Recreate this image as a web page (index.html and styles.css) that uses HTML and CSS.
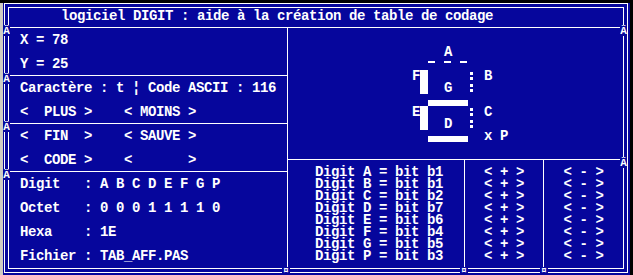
FILE: index.html
```html
<!DOCTYPE html>
<html lang="fr">
<head>
    <meta charset="UTF-8">
    <title>logiciel DIGIT</title>
    <link rel="stylesheet" href="styles.css">
</head>
<body>
    <div class="desk">
        <div class="frame">
            <div class="inner">
                <div class="title">logiciel DIGIT : aide à la création de table de codage</div>
                <div class="main">
                    <div class="left">
                        <div class="sec">
                            <div class="ln">X = 78</div>
                            <div class="ln">Y = 25</div>
                        </div>
                        <div class="sec">
                            <div class="ln">Caractère : t ¦ Code ASCII : 116</div>
                            <div class="ln">&lt;  PLUS &gt;    &lt; MOINS &gt;</div>
                        </div>
                        <div class="sec">
                            <div class="ln">&lt;  FIN  &gt;    &lt; SAUVE &gt;</div>
                            <div class="ln">&lt;  CODE &gt;    &lt;       &gt;</div>
                        </div>
                        <div class="sec last">
                            <div class="ln">Digit   : A B C D E F G P</div>
                            <div class="ln">Octet   : 0 0 0 1 1 1 1 0</div>
                            <div class="ln">Hexa    : 1E</div>
                            <div class="ln">Fichier : TAB_AFF.PAS</div>
                        </div>
                    </div>
                    <div class="right">
                        <div class="display">
                            <svg class="seg" width="334" height="131" viewBox="288 28 334 131">
                                <text x="444" y="56">A</text>
                                <rect x="428" y="61" width="7" height="2"/>
                                <rect x="444" y="61" width="7" height="2"/>
                                <rect x="460" y="61" width="7" height="2"/>
                                <text x="412" y="80">F</text>
                                <rect x="420" y="70" width="8" height="24"/>
                                <rect x="470" y="72" width="3" height="3"/>
                                <rect x="470" y="77" width="3" height="3"/>
                                <rect x="470" y="84" width="3" height="3"/>
                                <rect x="470" y="89" width="3" height="3"/>
                                <text x="484" y="80">B</text>
                                <text x="444" y="92">G</text>
                                <rect x="428" y="100" width="40" height="6"/>
                                <text x="412" y="116">E</text>
                                <rect x="420" y="106" width="8" height="24"/>
                                <rect x="470" y="108" width="3" height="3"/>
                                <rect x="470" y="113" width="3" height="3"/>
                                <rect x="470" y="120" width="3" height="3"/>
                                <rect x="470" y="125" width="3" height="3"/>
                                <text x="484" y="116">C</text>
                                <text x="444" y="128">D</text>
                                <rect x="428" y="136" width="40" height="6"/>
                                <text x="484" y="140">x</text>
                                <text x="500" y="140">P</text>
                            </svg>
                        </div>
                        <div class="bits">
                            <div class="col names">
                                <div>Digit A = bit b1</div>
                                <div>Digit B = bit b1</div>
                                <div>Digit C = bit b2</div>
                                <div>Digit D = bit b7</div>
                                <div>Digit E = bit b6</div>
                                <div>Digit F = bit b4</div>
                                <div>Digit G = bit b5</div>
                                <div>Digit P = bit b3</div>
                            </div>
                            <div class="col btn">
                                <div>&lt; + &gt;</div>
                                <div>&lt; + &gt;</div>
                                <div>&lt; + &gt;</div>
                                <div>&lt; + &gt;</div>
                                <div>&lt; + &gt;</div>
                                <div>&lt; + &gt;</div>
                                <div>&lt; + &gt;</div>
                                <div>&lt; + &gt;</div>
                            </div>
                            <div class="col btn last">
                                <div>&lt; - &gt;</div>
                                <div>&lt; - &gt;</div>
                                <div>&lt; - &gt;</div>
                                <div>&lt; - &gt;</div>
                                <div>&lt; - &gt;</div>
                                <div>&lt; - &gt;</div>
                                <div>&lt; - &gt;</div>
                                <div>&lt; - &gt;</div>
                            </div>
                        </div>
                    </div>
                </div>
            </div>
        </div>

        <span class="jn jl" style="top: 22px">Â</span>
        <span class="jn jl" style="top: 70px">Â</span>
        <span class="jn jl" style="top: 118px">Â</span>
        <span class="jn jl" style="top: 166px">Â</span>
        <span class="jn jr" style="top: 22px">Â</span>
        <span class="jn jr" style="top: 154px">Â</span>
        <span class="jb" style="left: 279px">¤</span>
        <span class="jb" style="left: 457px">¤</span>
        <span class="jb" style="left: 537px">¤</span>
    </div>
</body>
</html>
```

FILE: styles.css
```css
body {
    margin: 0;
    background-color: #000;
    color: #fff;
    font-family: "Liberation Mono", "DejaVu Sans Mono", monospace;
    font-weight: bold;
    font-size: 14px;
    letter-spacing: -0.4px;
    line-height: 12px;
}
.desk {
    position: relative;
    box-sizing: border-box;
    width: 630px;
    height: 273px;
    border-left: 3px solid #cfcbc3;
    background-color: #06069c;
}
.frame {
    box-sizing: border-box;
    width: 624px;
    height: 270px;
    margin: 3px 0 0 1px;
    padding: 3px;
    border: 1px solid #fff;
}
.inner {
    box-sizing: border-box;
    height: 100%;
    border: 1px solid #fff;
    display: flex;
    flex-direction: column;
}
.title {
    height: 19px;
    line-height: 17px;
    padding-left: 52px;
    border-bottom: 1px solid #fff;
    white-space: pre;
}
.main {
    flex: 1;
    display: flex;
}
.left {
    box-sizing: border-box;
    width: 279px;
    border-right: 1px solid #fff;
    display: flex;
    flex-direction: column;
}
.sec {
    box-sizing: border-box;
    height: 48px;
    border-bottom: 1px solid #fff;
}
.sec.last {
    flex: 1;
    border-bottom: none;
}
.ln {
    line-height: 24px;
    padding-left: 11px;
    white-space: pre;
}
.right {
    flex: 1;
    display: flex;
    flex-direction: column;
}
.display {
    box-sizing: border-box;
    height: 132px;
    border-bottom: 1px solid #fff;
}
.seg {
    display: block;
}
.seg text {
    fill: #fff;
    font-family: "Liberation Mono", monospace;
    font-weight: bold;
    font-size: 14px;
}
.seg rect {
    fill: #fff;
}
.bits {
    flex: 1;
    display: grid;
    grid-template-columns: 177px 79px 1fr;
}
.col {
    padding-top: 6px;
    border-right: 1px solid #fff;
}
.col div {
    white-space: pre;
}
.col.last {
    border-right: none;
}
.names {
    padding-left: 27px;
}
.btn {
    text-align: center;
}
.jn {
    position: absolute;
    width: 7px;
    height: 11px;
    background-color: #06069c;
    font-size: 11px;
    letter-spacing: 0;
    line-height: 12px;
    text-align: center;
    overflow: hidden;
}
.jl {
    left: 0;
}
.jr {
    left: 617px;
}
.jb {
    position: absolute;
    top: 264px;
    width: 8px;
    height: 8px;
    background-color: #06069c;
    font-size: 9px;
    letter-spacing: 0;
    line-height: 8px;
    text-align: center;
    overflow: hidden;
}
```
